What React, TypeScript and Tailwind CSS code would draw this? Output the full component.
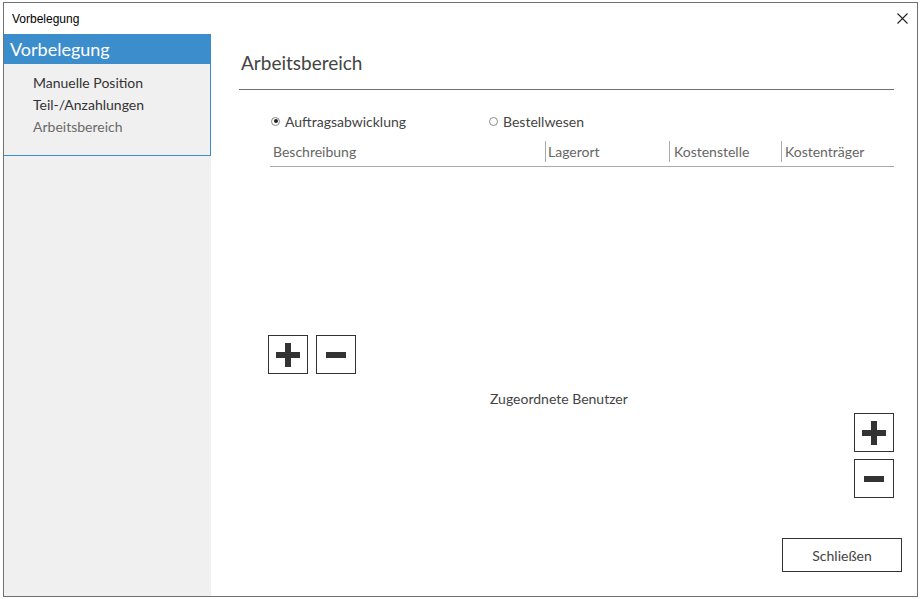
import React from "react";

const ui = { fontFamily: "Lato, 'Noto Sans', sans-serif" };

function PlusIcon() {
  return (
    <svg width="24" height="24" viewBox="0 0 24 24">
      <rect x="9" y="0" width="6" height="24" fill="#333" />
      <rect x="0" y="9" width="24" height="6" fill="#333" />
    </svg>
  );
}

function MinusIcon() {
  return (
    <svg width="20" height="6" viewBox="0 0 20 6">
      <rect x="0" y="0" width="20" height="6" fill="#333" />
    </svg>
  );
}

function IconButton({ kind }: { kind: "plus" | "minus" }) {
  return (
    <button className="w-[40px] h-[39px] border border-[#333] bg-white flex items-center justify-center">
      {kind === "plus" ? <PlusIcon /> : <MinusIcon />}
    </button>
  );
}

function Radio({ checked, label }: { checked?: boolean; label: string }) {
  return (
    <label className="flex items-center gap-[5px] text-[14px] text-[#444]">
      <span className="w-[9px] h-[9px] rounded-full border border-[#888] bg-white flex items-center justify-center">
        {checked && <span className="w-[4px] h-[4px] rounded-full bg-[#222]" />}
      </span>
      {label}
    </label>
  );
}

export default function App() {
  return (
    <div className="w-[920px] h-[599px] bg-white pl-[3px] pt-[2px]" style={ui}>
      <div className="w-[915px] h-[595px] border border-[#707070] flex flex-col bg-white">
        {/* title bar */}
        <div className="h-[31px] flex items-center justify-between pl-[8px] pr-[9px]">
          <span className="text-[12px] text-black" style={{ fontFamily: "'Liberation Sans', sans-serif" }}>
            Vorbelegung
          </span>
          <svg width="11" height="11" viewBox="0 0 11 11">
            <path d="M0.5 0.5 L10.5 10.5 M10.5 0.5 L0.5 10.5" stroke="#222" strokeWidth="1.1" />
          </svg>
        </div>

        <div className="flex flex-1">
          {/* sidebar */}
          <div className="w-[207px] bg-[#f0f0f0]">
            <div className="w-[207px] border border-[#3c8dcb] border-l-0">
              <div className="h-[29px] bg-[#3c8dcb] text-white text-[18px] leading-[29px] pl-[6px]">
                Vorbelegung
              </div>
              <div className="pl-[29px] pt-[8px] pb-[17px] text-[14px] leading-[22px]">
                <div className="text-[#333]">Manuelle Position</div>
                <div className="text-[#333]">Teil-/Anzahlungen</div>
                <div className="text-[#6a6a6a]">Arbeitsbereich</div>
              </div>
            </div>
          </div>

          {/* content */}
          <div className="flex-1 flex flex-col pl-[28px]">
            <div className="mr-[23px] h-[56px] pt-[16px] border-b border-[#707070]">
              <div className="text-[19px] leading-[26px] text-[#444] pl-[2px]">Arbeitsbereich</div>
            </div>

            <div className="ml-[31px] mr-[23px]">
              <div className="flex items-center h-[22px] mt-[20px] pl-[1px]">
                <div className="w-[218px]">
                  <Radio checked label="Auftragsabwicklung" />
                </div>
                <Radio label="Bestellwesen" />
              </div>
              <div className="flex h-[29px] mt-[6px] items-stretch border-b border-[#aaa] text-[14px] text-[#666]">
                <div className="w-[275px] pl-[3px] flex items-center mt-[3px] mb-[4px]">Beschreibung</div>
                <div className="w-[124px] border-l border-[#aaa] pl-[2px] flex items-center mt-[3px] mb-[4px]">Lagerort</div>
                <div className="w-[112px] border-l border-[#aaa] pl-[4px] flex items-center mt-[3px] mb-[4px]">Kostenstelle</div>
                <div className="flex-1 border-l border-[#aaa] pl-[3px] flex items-center mt-[3px] mb-[4px]">Kostenträger</div>
              </div>
            </div>

            <div className="flex gap-[8px] ml-[29px] mt-[168px]">
              <IconButton kind="plus" />
              <IconButton kind="minus" />
            </div>

            <div className="pl-[251px] mt-[15px] text-[14px] text-[#444] leading-[20px]">
              Zugeordnete Benutzer
            </div>

            <div className="flex flex-col items-end gap-[7px] mr-[23px] mt-[4px]">
              <IconButton kind="plus" />
              <IconButton kind="minus" />
            </div>

            <div className="flex justify-end mr-[15px] mt-[40px]">
              <button className="w-[120px] h-[34px] border border-[#333] bg-white text-[14px] text-[#444]">
                Schließen
              </button>
            </div>
          </div>
        </div>
      </div>
    </div>
  );
}
